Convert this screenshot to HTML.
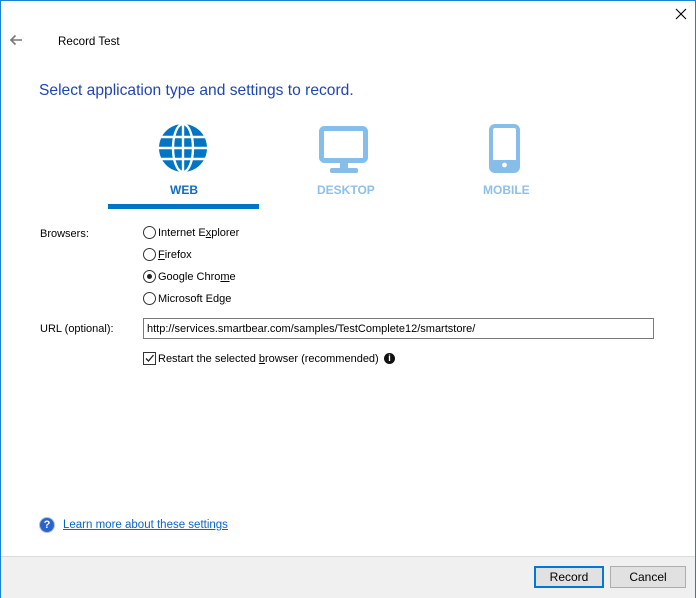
<!DOCTYPE html>
<html><head><style>
body{margin:0;width:696px;height:598px;overflow:hidden;font-family:"Liberation Sans",sans-serif;font-size:11px;color:#000;background:#fff}
.win{position:absolute;left:0;top:0;width:694px;height:596px;border:1px solid #1883d7;background:#fff}
.a{position:absolute;white-space:nowrap}
.radio{position:absolute;width:11px;height:11px;border:1px solid #333;border-radius:50%;background:#fff}
.btn{position:absolute;height:20px;border:1px solid #adadad;background:#e1e1e1;text-align:center;line-height:20px;font-size:12px}
</style></head><body>
<div class="win">
<svg class="a" style="left:8px;top:33px" width="14" height="12" viewBox="0 0 14 12"><path d="M13 6H2M6.5 1.5L2 6l4.5 4.5" stroke="#777" stroke-width="1.6" fill="none"/></svg>
<div class="a" style="left:57px;top:34px;font-size:11.6px">Record Test</div>
<svg class="a" style="left:674px;top:7px" width="12" height="12"><path d="M1 1L11 11M11 1L1 11" stroke="#000" stroke-width="1.1"/></svg>
<div class="a" style="left:38px;top:81px;font-size:15.6px;color:#1f45b5">Select application type and settings to record.</div>

<svg class="a" style="left:157px;top:122px" width="50" height="50" viewBox="0 0 50 50">
<circle cx="25" cy="25" r="24" fill="#0074c5"/>
<g stroke="#fff" stroke-width="2.4" fill="none">
<ellipse cx="25" cy="25" rx="10" ry="24"/>
<line x1="25" y1="0" x2="25" y2="50"/>
<line x1="0" y1="25" x2="50" y2="25"/>
<line x1="3" y1="14" x2="47" y2="14"/>
<line x1="3" y1="36" x2="47" y2="36"/>
</g></svg>
<div class="a" style="left:169px;top:182px;font-size:12px;font-weight:bold;color:#0f6cc0">WEB</div>
<div class="a" style="left:107px;top:203px;width:151px;height:5px;background:#0074c5"></div>

<svg class="a" style="left:318px;top:125px" width="50" height="48" viewBox="0 0 50 48">
<rect x="2.5" y="2.5" width="44" height="32" rx="3" fill="none" stroke="#86bde9" stroke-width="5"/>
<rect x="21" y="36" width="8" height="7" fill="#86bde9"/>
<rect x="11" y="42" width="28" height="5" rx="2" fill="#86bde9"/>
</svg>
<div class="a" style="left:316px;top:182px;font-weight:bold;font-size:12px;color:#8dc0ea">DESKTOP</div>

<svg class="a" style="left:488px;top:123px" width="32" height="50" viewBox="0 0 32 50">
<rect x="2" y="2" width="27" height="45" rx="4" fill="none" stroke="#86bde9" stroke-width="4"/>
<rect x="2" y="36" width="27" height="11" rx="3" fill="#86bde9"/>
<circle cx="15.5" cy="41" r="2.4" fill="#fff"/>
</svg>
<div class="a" style="left:482px;top:182px;font-weight:bold;font-size:12px;color:#8dc0ea">MOBILE</div>

<div class="a" style="left:39px;top:227px">Browsers:</div>
<div class="radio" style="left:142px;top:225px"></div><div class="a" style="left:157px;top:226px">Internet E<u>x</u>plorer</div>
<div class="radio" style="left:142px;top:247px"></div><div class="a" style="left:157px;top:248px"><u>F</u>irefox</div>
<div class="radio" style="left:142px;top:269px"></div><div class="a" style="left:146px;top:273px;width:5px;height:5px;border-radius:50%;background:#222"></div><div class="a" style="left:157px;top:270px">Google Chro<u>m</u>e</div>
<div class="radio" style="left:142px;top:291px"></div><div class="a" style="left:157px;top:292px">Microsoft Ed<u>g</u>e</div>

<div class="a" style="left:39px;top:322px">URL (optional):</div>
<div class="a" style="left:142px;top:317px;width:509px;height:19px;border:1px solid #7a7a7a"><span style="position:absolute;left:3px;top:4px">http://services.smartbear.com/samples/TestComplete12/smartstore/</span></div>

<div class="a" style="left:142px;top:351px;width:11px;height:11px;border:1px solid #333"><svg width="11" height="11" style="position:absolute;left:0;top:0"><path d="M2 5.5L4.5 8L9.5 2" stroke="#222" stroke-width="1.3" fill="none"/></svg></div>
<div class="a" style="left:157px;top:352px">Restart the selected <u>b</u>rowser (recommended)</div>
<div class="a" style="left:383px;top:352px;width:11px;height:11px;border-radius:50%;background:#111;color:#fff;font-size:9px;font-weight:bold;text-align:center;line-height:11px">i</div>

<div class="a" style="left:38px;top:516px;width:14px;height:14px;border-radius:50%;background:#2b63c9;border:1px solid #a8c4ee;color:#fff;font-size:11px;font-weight:bold;text-align:center;line-height:14px">?</div>
<div class="a" style="left:62px;top:518px;font-size:11.5px;color:#0a64c8;text-decoration:underline">Learn more about these settings</div>

<div class="a" style="left:0;top:555px;width:694px;height:41px;background:#f0f0f0;border-top:1px solid #dcdcdc"></div>
<div class="btn" style="left:533px;top:565px;width:66px;border:2px solid #0078d7;line-height:18px;height:18px">Record</div>
<div class="btn" style="left:609px;top:565px;width:74px">Cancel</div>
</div>
</body></html>
